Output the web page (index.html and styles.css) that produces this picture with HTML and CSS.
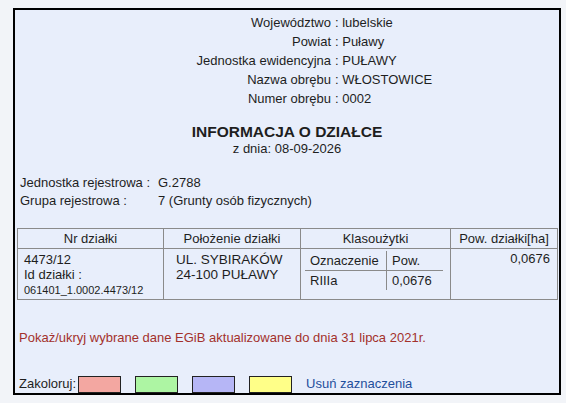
FILE: index.html
```html
<!DOCTYPE html>
<html lang="pl">
<head>
<meta charset="utf-8">
<link rel="stylesheet" href="styles.css">
</head>
<body>
<div class="box">
  <div class="loc">
    <div class="lbl">Województwo</div><div class="val">: lubelskie</div>
    <div class="lbl">Powiat</div><div class="val">: Puławy</div>
    <div class="lbl">Jednostka ewidencyjna</div><div class="val">: PUŁAWY</div>
    <div class="lbl">Nazwa obrębu</div><div class="val">: WŁOSTOWICE</div>
    <div class="lbl">Numer obrębu</div><div class="val">: 0002</div>
  </div>
  <div class="title">INFORMACJA O DZIAŁCE</div>
  <div class="date">z dnia: 08-09-2026</div>
  <div class="reg">
    <div>Jednostka rejestrowa :</div><div>G.2788</div>
    <div>Grupa rejestrowa :</div><div>7 (Grunty osób fizycznych)</div>
  </div>
  <table class="parcels">
    <thead>
      <tr>
        <th class="c1">Nr działki</th>
        <th class="c2">Położenie działki</th>
        <th class="c3">Klasoużytki</th>
        <th class="c4">Pow. działki[ha]</th>
      </tr>
    </thead>
    <tbody>
      <tr>
        <td class="nr">4473/12<br>Id działki :<br><span class="id">061401_1.0002.4473/12</span></td>
        <td class="pos">UL. SYBIRAKÓW<br>24-100 PUŁAWY</td>
        <td class="kl">
          <table class="inner">
            <tr><td class="i1 ih">Oznaczenie</td><td class="i2 ih">Pow.</td></tr>
            <tr><td class="i1">RIIIa</td><td class="i2">0,0676</td></tr>
          </table>
        </td>
        <td class="area">0,0676</td>
      </tr>
    </tbody>
  </table>
  <div class="toggle">Pokaż/ukryj wybrane dane EGiB aktualizowane do dnia 31 lipca 2021r.</div>
  <div class="colors">
    <span>Zakoloruj:</span>
    <span class="sw pink"></span>
    <span class="sw green"></span>
    <span class="sw blue"></span>
    <span class="sw yellow"></span>
    <span class="clear">Usuń zaznaczenia</span>
  </div>
</div>
</body>
</html>
```

FILE: styles.css
```css
html, body {
  margin: 0;
  padding: 0;
  background: #f2f4f8;
}
body {
  font-family: "Liberation Sans", Arial, sans-serif;
  font-size: 13px;
  color: #1e1e1e;
}
.box {
  box-sizing: border-box;
  margin: 8px 0 0 13px;
  width: 548px;
  height: 387px;
  border: 2px solid #000;
  background: #e8eefb;
  display: flex;
  flex-direction: column;
}
.loc {
  display: grid;
  grid-template-columns: 320px auto;
  line-height: 19px;
  padding-top: 3px;
}
.lbl {
  text-align: right;
  padding-right: 4px;
}
.title {
  margin-top: 15px;
  text-align: center;
  font-weight: bold;
  font-size: 15.5px;
  line-height: 18px;
}
.date {
  text-align: center;
  line-height: 16px;
}
.reg {
  margin-top: 17px;
  margin-left: 5px;
  display: grid;
  grid-template-columns: 138px auto;
  line-height: 18px;
}
.parcels {
  margin: 18px 0 0 2px;
  width: 541px;
  border-collapse: collapse;
  border: 1px solid #555;
}
.parcels th {
  font-weight: normal;
  height: 19px;
  padding: 0;
  border: 1px solid #8a8a8a;
  text-align: center;
  line-height: 19px;
}
.c1 { width: 145px; }
.c2 { width: 136px; }
.c3 { width: 149px; }
.parcels td {
  border: 1px solid #8a8a8a;
  vertical-align: top;
  padding: 0;
}
.nr {
  padding: 3px 0 0 6px !important;
  line-height: 15px;
  height: 47px;
}
.id {
  font-size: 11px;
  line-height: 17px;
}
.pos {
  padding: 3px 0 0 12px !important;
  line-height: 15px;
  font-size: 13.5px;
}
.kl {
  padding: 2px 7px 0 4px !important;
}
.inner {
  border-collapse: collapse;
  width: 100%;
}
.inner td {
  border: none;
  line-height: 19px;
  padding: 0 0 0 5px;
}
.inner .ih {
  border-bottom: 1px solid #8a8a8a;
}
.inner .i1 {
  width: 76px;
  border-right: 1px solid #8a8a8a;
}
.area {
  text-align: right;
  padding: 2px 7px 0 0 !important;
  line-height: 15px;
}
.toggle {
  margin: 30px 0 0 4px;
  color: #a3312c;
  line-height: 16px;
}
.colors {
  margin: 29px 0 0 4px;
  display: flex;
  align-items: center;
  line-height: 18px;
}
.sw {
  box-sizing: border-box;
  width: 43px;
  height: 17px;
  border: 1px solid #222;
  margin-left: 14px;
}
.colors .pink { margin-left: 2px; background: #f3a7a1; }
.green { background: #adf5a3; }
.blue { background: #b6b6f6; }
.yellow { background: #ffff88; }
.clear {
  margin-left: 14px;
  color: #1f4f9c;
}
```
